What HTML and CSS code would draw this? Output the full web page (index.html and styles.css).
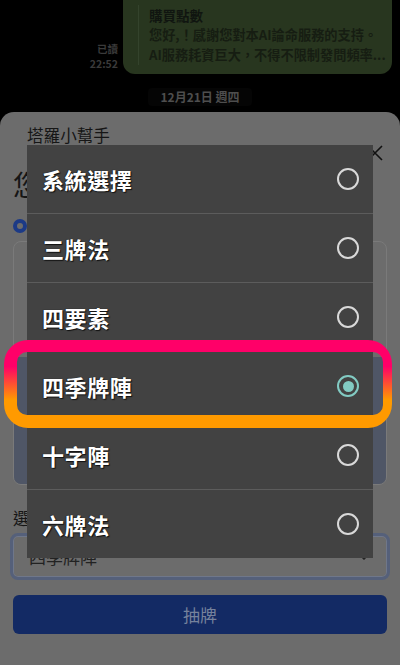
FILE: index.html
```html
<!DOCTYPE html>
<html lang="zh-Hant">
<head>
<meta charset="utf-8">
<link rel="stylesheet" href="styles.css">
</head>
<body>
<div class="screen">
  <div class="chat">
    <div class="msg-row">
      <div class="meta"><span>已讀</span><span>22:52</span></div>
      <div class="bubble">
        <div class="quote">
          <div class="q-title">購買點數</div>
          <div class="q-line">您好,！感謝您對本AI論命服務的支持。</div>
          <div class="q-line">AI服務耗資巨大，不得不限制發問頻率...</div>
        </div>
      </div>
    </div>
    <div class="date-row"><span class="date">12月21日 週四</span></div>
  </div>

  <div class="sheet">
    <div class="sheet-head">
      <span class="sheet-title">塔羅小幫手</span>
      <svg class="close" width="16" height="16" viewBox="0 0 16 16"><path d="M1 1L15 15M15 1L1 15" stroke="#111" stroke-width="1.6" fill="none"/></svg>
    </div>
    <div class="big">您</div>
    <div class="radio-blue"></div>
    <div class="textbox">
      <div class="textbox-top"></div>
      <div class="textbox-bottom"></div>
    </div>
    <div class="label">選</div>
    <div class="select">
      <span>四季牌陣</span>
      <svg width="10" height="6" viewBox="0 0 10 6"><path d="M1 1L5 5L9 1" stroke="#222" stroke-width="1.5" fill="none"/></svg>
    </div>
    <div class="btn">抽牌</div>
  </div>

  <div class="dialog">
    <div class="opt"><span>系統選擇</span><span class="radio"></span></div>
    <div class="opt"><span>三牌法</span><span class="radio"></span></div>
    <div class="opt"><span>四要素</span><span class="radio"></span></div>
    <div class="opt"><span>四季牌陣</span><span class="radio on"></span></div>
    <div class="opt"><span>十字陣</span><span class="radio"></span></div>
    <div class="opt"><span>六牌法</span><span class="radio"></span></div>
  </div>

  <svg class="highlight" width="400" height="100" viewBox="0 0 400 100">
    <defs>
      <linearGradient id="hg" x1="0" y1="0" x2="0" y2="1">
        <stop offset="0.3" stop-color="#ff0068"/>
        <stop offset="0.68" stop-color="#ff9a00"/>
      </linearGradient>
    </defs>
    <path fill="url(#hg)" fill-rule="evenodd" d="M28 0H368A24 24 0 0 1 392 24V64A24 24 0 0 1 368 88H28A24 24 0 0 1 4 64V24A24 24 0 0 1 28 0Z M27 12H373A10 10 0 0 1 383 22V65A10 10 0 0 1 373 75H27A10 10 0 0 1 17 65V22A10 10 0 0 1 27 12Z"/>
  </svg>
</div>
</body>
</html>
```
FILE: styles.css
```css
* { box-sizing: border-box; }
html, body { margin: 0; padding: 0; }
body {
  background: #000;
  font-family: "Noto Sans CJK TC", "Noto Sans", sans-serif;
  width: 400px;
  height: 665px;
  overflow: hidden;
}
.screen {
  position: relative;
  width: 400px;
  height: 665px;
  display: flex;
  flex-direction: column;
}
.chat {
  height: 112px;
  display: flex;
  flex-direction: column;
}
.msg-row {
  display: flex;
  justify-content: flex-end;
  align-items: flex-end;
  gap: 5px;
  padding-right: 8px;
}
.meta {
  display: flex;
  flex-direction: column;
  align-items: flex-end;
  font-size: 10.5px;
  line-height: 15px;
  color: #3a3a3a;
  font-weight: 700;
  padding-bottom: 3px;
}
.bubble {
  width: 269px;
  height: 74px;
  background: #28361f;
  border-radius: 0 0 12px 12px;
  padding: 11px 10px 0 15px;
}
.quote {
  border-left: 1px solid #34432c;
  padding-left: 10px;
  position: relative;
  top: -6px;
}
.q-title {
  font-size: 13.5px;
  line-height: 20px;
  font-weight: 700;
  color: #101510;
}
.q-line {
  font-size: 13.2px;
  line-height: 20px;
  color: #161d12;
  white-space: nowrap;
  font-weight: 700;
}
.date-row {
  display: flex;
  justify-content: center;
  margin-top: 14px;
}
.date {
  font-size: 12px;
  line-height: 18px;
  font-weight: 700;
  color: #4e4e4e;
  background: #050505;
  padding: 0 12px;
  border-radius: 4px;
}
.sheet {
  flex: 1;
  background: #6c6c6c;
  border-radius: 14px 14px 0 0;
  padding: 0 13px;
  display: flex;
  flex-direction: column;
}
.sheet-head {
  display: flex;
  justify-content: space-between;
  align-items: flex-start;
  padding: 12px 4px 0 14px;
  height: 50px;
}
.sheet-title {
  font-size: 16.6px;
  line-height: 22px;
  color: #161616;
}
.close { margin-top: 21px; }
.big {
  font-size: 28px;
  line-height: 36px;
  color: #161616;
  margin-top: 4px;
}
.radio-blue {
  width: 14px;
  height: 14px;
  border-radius: 50%;
  border: 4px solid #1c3a86;
  margin-top: 17px;
}
.textbox {
  margin-top: 8px;
  height: 244px;
  border: 1px solid #7a7a7a;
  border-radius: 8px;
  display: flex;
  flex-direction: column;
  overflow: hidden;
}
.textbox-top { height: 115px; }
.textbox-bottom { flex: 1; background: #4f5666; }
.label {
  font-size: 17px;
  line-height: 24px;
  color: #161616;
  margin-top: 21px;
}
.select {
  margin: 3px -3px 0;
  height: 47px;
  border: 3px solid #55607a;
  box-shadow: inset 0 0 0 1px #6f778a;
  border-radius: 8px;
  display: flex;
  align-items: center;
  justify-content: space-between;
  padding: 0 18px 0 16px;
  font-size: 17px;
  color: #222;
}
.btn {
  margin-top: 15px;
  height: 39px;
  background: #132a64;
  border-radius: 6px;
  display: flex;
  align-items: center;
  justify-content: center;
  color: #76829c;
  font-size: 17px;
}
.dialog {
  position: absolute;
  left: 27px;
  top: 145px;
  width: 346px;
  background: #424242;
  display: flex;
  flex-direction: column;
}
.opt {
  height: 69px;
  display: flex;
  align-items: center;
  justify-content: space-between;
  padding: 0 14px 0 15px;
  border-top: 1px solid #5c5c5c;
  color: #fff;
  font-size: 22px;
  font-weight: 700;
  letter-spacing: 0.6px;
  text-shadow: 1px 1px 1px #111, -0.5px 0 1px #111;
}
.opt:first-child { border-top: none; height: 68px; }
.radio {
  width: 22px;
  height: 22px;
  border-radius: 50%;
  border: 2.5px solid #d9d9d9;
}
.radio.on {
  border-color: #82cbc3;
  display: flex;
  align-items: center;
  justify-content: center;
}
.radio.on::after {
  content: "";
  width: 11px;
  height: 11px;
  border-radius: 50%;
  background: #82cbc3;
}
.highlight {
  position: absolute;
  left: 0;
  top: 340px;
}
```
